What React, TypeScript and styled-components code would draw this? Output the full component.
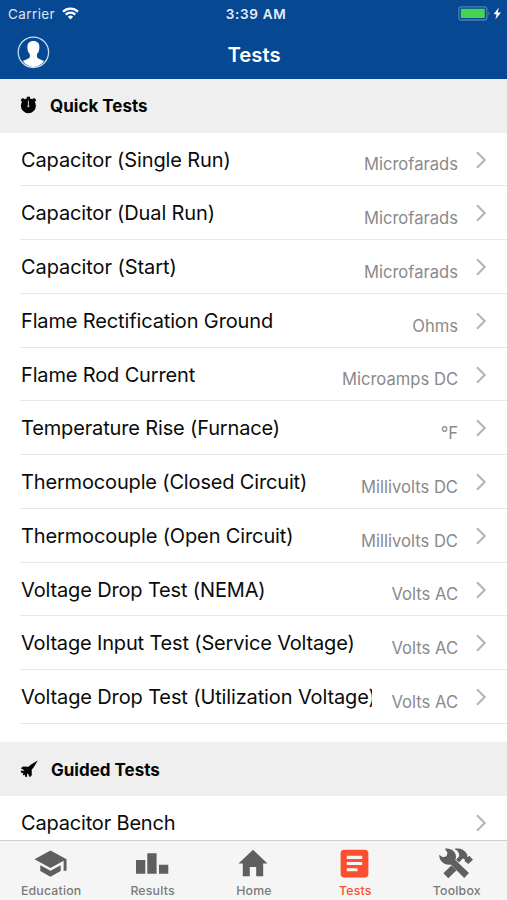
import React from "react";
import styled, { createGlobalStyle } from "styled-components";
import { MdSchool, MdArticle } from "react-icons/md";

const GlobalStyle = createGlobalStyle`
  * { box-sizing: border-box; }
  body { margin: 0; font-family: Inter, "Liberation Sans", sans-serif; background: #fff; }
`;

const Screen = styled.div`
  width: 507px;
  height: 900px;
  display: flex;
  flex-direction: column;
  overflow: hidden;
  background: #fff;
  color: #0b0b0b;
`;

const Header = styled.header`
  flex: none;
  height: 79px;
  background: #074893;
  color: #fff;
`;

const StatusBar = styled.div`
  height: 27px;
  display: grid;
  grid-template-columns: 1fr auto 1fr;
  align-items: center;
  padding: 0 5px 0 8px;
`;

const Carrier = styled.div`
  display: flex;
  align-items: center;
  gap: 7px;
  color: #dbe6f4;
  font-size: 13.5px;
  letter-spacing: 0.4px;
`;

const Clock = styled.div`
  margin-left: 2px;
  color: #e6eef8;
  font-weight: 600;
  font-size: 13.5px;
  letter-spacing: 0.7px;
`;

const Power = styled.div`
  display: flex;
  justify-content: flex-end;
`;

const NavBar = styled.div`
  height: 52px;
  display: grid;
  grid-template-columns: 1fr auto 1fr;
  align-items: center;
  padding: 0 17px;
`;

const Title = styled.h1`
  margin: 3px 0 0 1px;
  font-size: 20.3px;
  font-weight: 600;
  letter-spacing: 0;
`;

const Avatar = styled.svg`
  display: block;
  margin-bottom: 2px;
`;

const List = styled.main`
  flex: 1;
  min-height: 0;
  overflow: hidden;
`;

const Section = styled.section`
  margin-bottom: 18.25px;
`;

const SectionHeader = styled.div`
  height: 53.7px;
  display: flex;
  align-items: center;
  gap: 12px;
  padding-left: 19px;
  background: #efefef;
`;

const SectionIcon = styled.span`
  width: 19px;
  height: 19px;
  display: flex;
`;

const SectionTitle = styled.h2<{ $indent?: number }>`
  margin: 1px 0 0 ${(p) => p.$indent ?? 0}px;
  font-size: 17px;
  line-height: 20px;
  font-weight: 700;
  color: #050505;
`;

const Row = styled.div`
  height: 53.75px;
  margin-left: 20px;
  padding: 1px 20px 0 1px;
  display: flex;
  align-items: center;
  border-bottom: 1px solid #e6e6e6;
`;

const RowLabel = styled.div<{ $spacing: number }>`
  flex: none;
  max-width: 351px;
  overflow: hidden;
  white-space: nowrap;
  font-size: 20px;
  line-height: 30px;
  letter-spacing: ${(p) => p.$spacing}px;
`;

const RowValue = styled.div`
  margin-left: auto;
  padding: 9.5px 17px 0 0;
  font-size: 16.6px;
  line-height: 20px;
  color: #8a8a8a;
  white-space: nowrap;
`;

const Chevron = styled.svg`
  flex: none;
`;

const TabBar = styled.nav`
  flex: none;
  height: 60px;
  border-top: 1px solid #cfcfcf;
  background: #f5f5f5;
  display: grid;
  grid-template-columns: repeat(5, 1fr);
`;

const Tab = styled.div<{ $active?: boolean }>`
  display: flex;
  flex-direction: column;
  align-items: center;
  padding: 4px 0 0 1px;
  color: ${(p) => (p.$active ? "#fb4f2f" : "#5f5f5f")};
`;

const TabIcon = styled.span`
  height: 36px;
  display: flex;
  align-items: center;
  justify-content: center;
  padding-right: 1.5px;
`;

const TabLabel = styled.span<{ $active?: boolean }>`
  margin-top: 2px;
  font-size: 12.3px;
  line-height: 16px;
  font-weight: 500;
  letter-spacing: 0.2px;
  color: ${(p) => (p.$active ? "#fb4f2f" : "#7a7a7a")};
`;

const quickTests: [string, string, number][] = [
  ["Capacitor (Single Run)", "Microfarads", -0.12],
  ["Capacitor (Dual Run)", "Microfarads", -0.12],
  ["Capacitor (Start)", "Microfarads", -0.08],
  ["Flame Rectification Ground", "Ohms", -0.14],
  ["Flame Rod Current", "Microamps DC", -0.15],
  ["Temperature Rise (Furnace)", "°F", -0.15],
  ["Thermocouple (Closed Circuit)", "Millivolts DC", -0.16],
  ["Thermocouple (Open Circuit)", "Millivolts DC", -0.13],
  ["Voltage Drop Test (NEMA)", "Volts AC", -0.15],
  ["Voltage Input Test (Service Voltage)", "Volts AC", -0.17],
  ["Voltage Drop Test (Utilization Voltage)", "Volts AC", -0.13],
];

const TestRow = ({ label, value, spacing }: { label: string; value?: string; spacing: number }) => (
  <Row>
    <RowLabel $spacing={spacing}>{label}</RowLabel>
    <RowValue>{value}</RowValue>
    <Chevron width="12" height="18" viewBox="0 0 12 18">
      <path d="M2 1.2 9.7 9 2 16.800" fill="none" stroke="#b5b5b5" strokeWidth="2.1" />
    </Chevron>
  </Row>
);

const WifiIcon = () => (
  <svg width="17" height="13" viewBox="0 0 17 13" fill="none" stroke="#fff" strokeWidth="2.3">
    <path d="M1 4.7a10.6 10.6 0 0 1 15 0" />
    <path d="M3.7 7.6a6.8 6.8 0 0 1 9.6 0" />
    <path d="M8.5 12.4 5.9 9.8a3.7 3.7 0 0 1 5.2 0z" fill="#fff" stroke="none" />
  </svg>
);

const BatteryIcon = () => (
  <svg width="44" height="15" viewBox="0 0 44 15">
    <rect x="0.8" y="0.8" width="28" height="13.2" rx="2.6" fill="none" stroke="#4b7fbd" strokeWidth="1.3" />
    <rect x="2.8" y="2.8" width="24" height="9.2" rx="0.8" fill="#43d551" />
    <path d="M30.4 5.4c1.6.5 1.6 3.5 0 4z" fill="#4b7fbd" />
    <path d="M40.8 1.600 35.600 8.200h3l-1.200 5.200 5.600-7h-3.200z" fill="#fff" />
  </svg>
);

const StopwatchIcon = () => (
  <svg width="19" height="19" viewBox="0 0 19 19">
    <circle cx="9.4" cy="9.8" r="7.5" fill="#050505" />
    <path d="M7.800.8h3.200v2H7.800zM1.600 3.900l2-2 2.500 1.300-3 3zM17.200 3.900l-2-2-2.500 1.300 3 3z" fill="#050505" />
    <path d="M9.400 4.500v5.500" stroke="#ccc" strokeWidth="1" />
    <circle cx="9.4" cy="10.3" r="1" fill="#ccc" />
  </svg>
);

const JetIcon = () => (
  <svg width="19" height="19" viewBox="-1 0 19 19" fill="#050505">
    <path d="M17.700.6 10.700 4.700 8.500 6.700 3 6.500.8 8.200l3.500 2-.3.600-3-.200-.2 1.900 2.700.700-.9 1 1.200 1.200 1-.8.600 2.400 1.800-.200-.1-2.800.8-.4L9.800 17.200l2-2-.1-5.400 1.900-2.300z" />
  </svg>
);

const BarsIcon = () => (
  <svg width="34" height="24" viewBox="0 0 34 24" fill="currentColor">
    <path d="M1 9h9.300v13.800H1zM12.300 2.300h9.300v20.500h-9.300zM24 13.800h9.300v9H24z" />
  </svg>
);

const HomeIcon = () => (
  <svg width="30" height="28" viewBox="0 0 30 28" fill="currentColor">
    <path d="M15 .7 29.500 14.500h-4.300V27.200h-7V18h-6.400v9.200h-7V14.500H.5z" />
  </svg>
);

const ToolsIcon = () => (
  <svg width="36" height="32" viewBox="0 0 36 32" fill="currentColor">
    <path d="M6.800 1.800C12.500.5 17.800 4.500 18 9.500 18 11 17.700 12 17.300 13L31 26 26.200 31 12.800 17.600C6.500 18.800 1 14 1.200 7.800L4.800 10.300 8.500 9.300 9.500 5.700z" />
    <path d="M5.400 26.300 13.300 18.400 18.500 23.200 10.300 31.200z" />
    <path d="M16.300 2C21.500.700 26.500 2.500 29.200 7.500V10L31.500 9 35 12.700 30.200 17 26.800 14.200 26.500 12 24.700 11.600 21 15.600 18 12.800 21.200 9.200C21.500 6 20 3.500 16.300 2z" />
  </svg>
);

export default function App() {
  return (
    <>
      <GlobalStyle />
      <Screen>
        <Header>
          <StatusBar>
            <Carrier>
              Carrier <WifiIcon />
            </Carrier>
            <Clock>3:39 AM</Clock>
            <Power>
              <BatteryIcon />
            </Power>
          </StatusBar>
          <NavBar>
            <Avatar width="33" height="33" viewBox="0 0 33 33">
              <circle cx="16.400" cy="16.300" r="15.200" fill="none" stroke="#c9daef" strokeWidth="1.300" />
              <path d="M16.400 5c-4 0-6.200 2.400-6 6.200.1 3.200.7 5.200 2.400 6.900v3.200c-.7 1.700-3.600 2-7 3.800 2.700 3.700 6.300 5.900 10.600 5.900s7.900-2.200 10.600-5.900c-3.400-1.800-6.300-2.100-7-3.800v-3.200c1.700-1.700 2.300-3.700 2.400-6.900.2-3.800-2-6.200-6-6.200z" fill="#fff" />
            </Avatar>
            <Title>Tests</Title>
          </NavBar>
        </Header>
        <List>
          <Section>
            <SectionHeader>
              <SectionIcon>
                <StopwatchIcon />
              </SectionIcon>
              <SectionTitle>Quick Tests</SectionTitle>
            </SectionHeader>
            {quickTests.map(([label, value, spacing]) => (
              <TestRow key={label} label={label} value={value} spacing={spacing} />
            ))}
          </Section>
          <Section>
            <SectionHeader>
              <SectionIcon>
                <JetIcon />
              </SectionIcon>
              <SectionTitle $indent={1}>Guided Tests</SectionTitle>
            </SectionHeader>
            <TestRow label="Capacitor Bench" spacing={-0.18} />
          </Section>
        </List>
        <TabBar>
          <Tab>
            <TabIcon>
              <MdSchool size={35} />
            </TabIcon>
            <TabLabel>Education</TabLabel>
          </Tab>
          <Tab>
            <TabIcon>
              <BarsIcon />
            </TabIcon>
            <TabLabel>Results</TabLabel>
          </Tab>
          <Tab>
            <TabIcon>
              <HomeIcon />
            </TabIcon>
            <TabLabel>Home</TabLabel>
          </Tab>
          <Tab $active>
            <TabIcon>
              <MdArticle size={37} />
            </TabIcon>
            <TabLabel $active>Tests</TabLabel>
          </Tab>
          <Tab>
            <TabIcon>
              <ToolsIcon />
            </TabIcon>
            <TabLabel>Toolbox</TabLabel>
          </Tab>
        </TabBar>
      </Screen>
    </>
  );
}
